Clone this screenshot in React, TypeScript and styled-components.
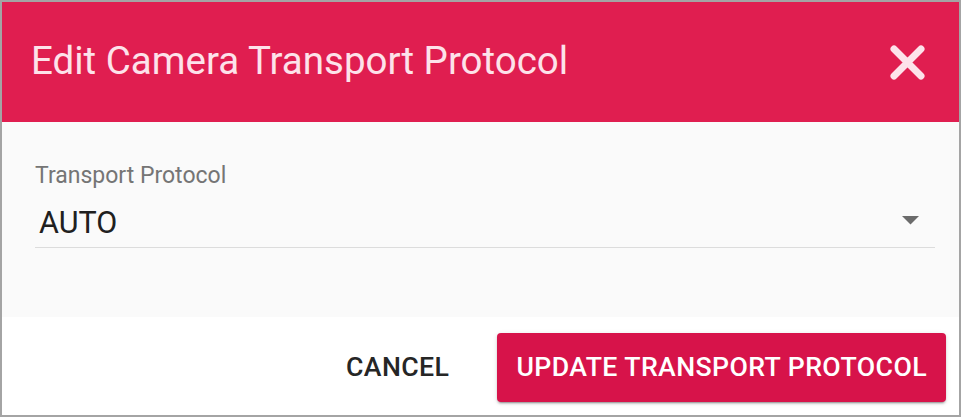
import React from "react";
import styled, { createGlobalStyle } from "styled-components";

const Global = createGlobalStyle`
  html, body { margin: 0; padding: 0; background: #ffffff; }
  * { box-sizing: border-box; }
`;

const Dialog = styled.div`
  width: 961px;
  height: 417px;
  border: 2px solid #a4a4a4;
  display: flex;
  flex-direction: column;
  font-family: Roboto, "Liberation Sans", sans-serif;
  background: #ffffff;
`;

const Header = styled.header`
  height: 120px;
  flex: none;
  background: #e01e50;
  display: flex;
  align-items: center;
  justify-content: space-between;
  padding: 0 34px 0 29px;
`;

const Title = styled.h1`
  margin: 0 0 3px 0;
  font-size: 38.5px;
  font-weight: 400;
  color: #fde2ea;
  letter-spacing: 0;
`;

const CloseButton = styled.button`
  border: 0;
  background: transparent;
  padding: 0;
  width: 35px;
  height: 35px;
  display: flex;
  cursor: pointer;
`;

const Body = styled.section`
  height: 195px;
  flex: none;
  background: #fafafa;
  padding: 41px 24px 0 33px;
`;

const Field = styled.div`
  display: flex;
  flex-direction: column;
`;

const Label = styled.label`
  font-size: 23px;
  color: #757575;
  line-height: 26px;
`;

const Select = styled.div`
  display: flex;
  align-items: center;
  justify-content: space-between;
  height: 59px;
  border-bottom: 1px solid #dcdcdc;
  padding: 14px 16px 6px 4px;
`;

const Value = styled.span`
  font-size: 30.5px;
  color: #202020;
`;

const Arrow = styled.svg`
  margin-bottom: 4px;
`;

const Footer = styled.footer`
  flex: 1;
  display: flex;
  justify-content: flex-end;
  align-items: center;
  gap: 33px;
  padding: 2px 13px 0 0;
`;

const TextButton = styled.button<{ $primary?: boolean }>`
  border: 0;
  height: 69px;
  border-radius: 4px;
  font-family: Roboto, "Liberation Sans", sans-serif;
  font-weight: 500;
  font-size: 26.7px;
  letter-spacing: 0.4px;
  text-transform: uppercase;
  padding: 0 ${(p) => (p.$primary ? "19px" : "15px")};
  background: ${(p) => (p.$primary ? "#d7134a" : "transparent")};
  color: ${(p) => (p.$primary ? "#ffffff" : "#262626")};
  box-shadow: ${(p) =>
    p.$primary
      ? "0 3px 1px -2px rgba(0,0,0,0.2), 0 2px 2px 0 rgba(0,0,0,0.14), 0 1px 5px 0 rgba(0,0,0,0.12)"
      : "none"};
  cursor: pointer;
`;

export default function App() {
  return (
    <>
      <Global />
      <Dialog>
        <Header>
          <Title>Edit Camera Transport Protocol</Title>
          <CloseButton aria-label="close">
            <svg width="35" height="35" viewBox="0 0 35 35">
              <path
                d="M4 4 L31 31 M31 4 L4 31"
                stroke="#fde2ea"
                strokeWidth="7"
                strokeLinecap="round"
              />
            </svg>
          </CloseButton>
        </Header>
        <Body>
          <Field>
            <Label>Transport Protocol</Label>
            <Select>
              <Value>AUTO</Value>
              <Arrow width="17" height="9" viewBox="0 0 17 9">
                <path d="M0 0 L17 0 L8.5 8.5 Z" fill="#6b6b6b" />
              </Arrow>
            </Select>
          </Field>
        </Body>
        <Footer>
          <TextButton>Cancel</TextButton>
          <TextButton $primary>Update Transport Protocol</TextButton>
        </Footer>
      </Dialog>
    </>
  );
}
